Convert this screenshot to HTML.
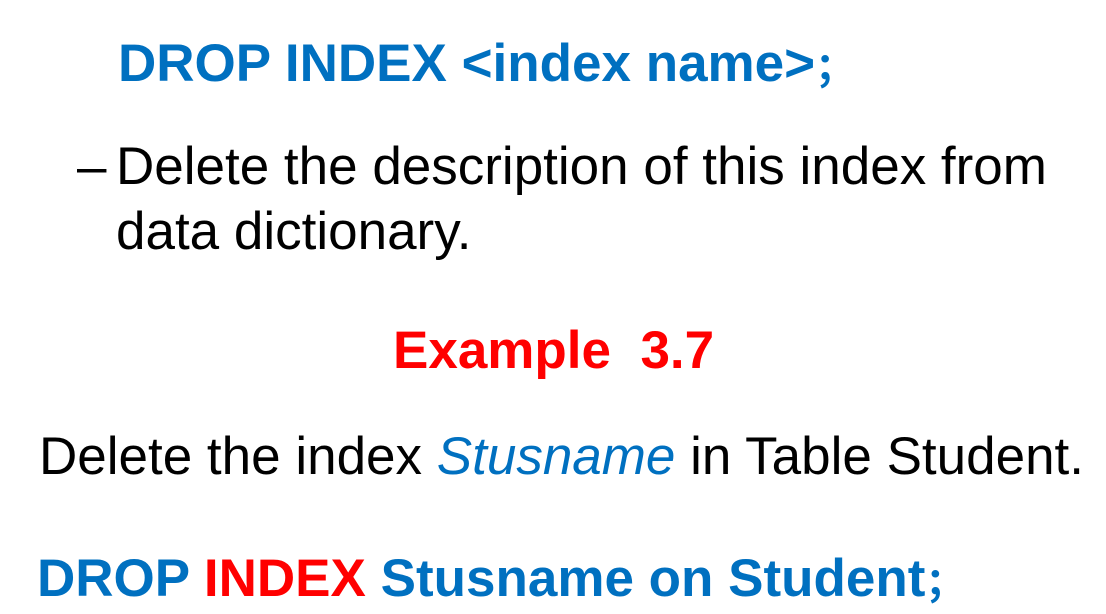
<!DOCTYPE html>
<html><head><meta charset="utf-8"><style>
body{margin:0;width:1106px;height:614px;background:#fff;position:relative;overflow:hidden;font-family:"Liberation Sans","Noto Sans CJK SC",sans-serif;}
div{position:absolute;line-height:1;white-space:nowrap;}
.b{font-weight:bold;}
.bl{color:#0070c0;}
.r{color:#ff0000;}
.sc{font-size:40px;}
</style></head><body>
<div class="b bl" style="left:118px;top:37px;font-size:53px;">DROP INDEX &lt;index name&gt;<span class="sc">；</span></div>
<div style="left:77px;top:140px;font-size:53px;">–</div>
<div style="left:116px;top:140px;font-size:53px;">Delete the description of this index from</div>
<div style="left:116px;top:205px;font-size:53px;">data dictionary.</div>
<div class="b r" style="left:393px;top:324px;font-size:53px;">Example&nbsp; 3.7</div>
<div style="left:39px;top:430px;font-size:53px;">Delete the index <i class="bl">Stusname</i> in Table Student.</div>
<div class="b bl" style="left:37px;top:552px;font-size:53px;">DROP <span class="r">INDEX</span> Stusname on Student<span class="sc">；</span></div>
</body></html>
